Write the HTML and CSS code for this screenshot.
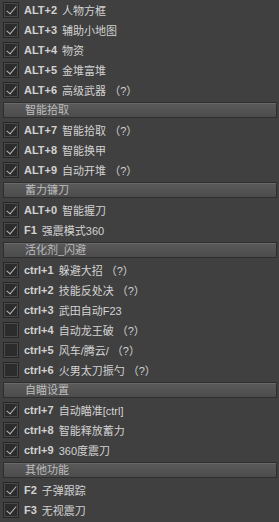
FILE: index.html
```html
<!DOCTYPE html>
<html lang="zh">
<head>
  <meta charset="UTF-8">
  <meta name="viewport" content="width=device-width, initial-scale=1.0">
  <title>功能设置</title>
  <link rel="stylesheet" href="styles.css">
</head>
<body>
  <div class="panel">
    <label class="opt"><span class="box on"></span><span class="key">ALT+2</span><span>人物方框</span></label>
    <label class="opt"><span class="box on"></span><span class="key">ALT+3</span><span>辅助小地图</span></label>
    <label class="opt"><span class="box on"></span><span class="key">ALT+4</span><span>物资</span></label>
    <label class="opt"><span class="box on"></span><span class="key">ALT+5</span><span>金堆富堆</span></label>
    <label class="opt"><span class="box on"></span><span class="key">ALT+6</span><span>高级武器 （?）</span></label>

    <div class="group"><span>智能拾取</span></div>
    <label class="opt"><span class="box on"></span><span class="key">ALT+7</span><span>智能拾取 （?）</span></label>
    <label class="opt"><span class="box on"></span><span class="key">ALT+8</span><span>智能换甲</span></label>
    <label class="opt"><span class="box on"></span><span class="key">ALT+9</span><span>自动开堆 （?）</span></label>

    <div class="group"><span>蓄力镰刀</span></div>
    <label class="opt"><span class="box on"></span><span class="key">ALT+0</span><span>智能握刀</span></label>
    <label class="opt"><span class="box on"></span><span class="key">F1</span><span>强震模式360</span></label>

    <div class="group"><span>活化剂_闪避</span></div>
    <label class="opt"><span class="box on"></span><span class="key">ctrl+1</span><span>躲避大招 （?）</span></label>
    <label class="opt"><span class="box on"></span><span class="key">ctrl+2</span><span>技能反处决 （?）</span></label>
    <label class="opt"><span class="box on"></span><span class="key">ctrl+3</span><span>武田自动F23</span></label>
    <label class="opt"><span class="box"></span><span class="key">ctrl+4</span><span>自动龙王破 （?）</span></label>
    <label class="opt"><span class="box"></span><span class="key">ctrl+5</span><span>风车/腾云/ （?）</span></label>
    <label class="opt"><span class="box"></span><span class="key">ctrl+6</span><span>火男太刀振勺 （?）</span></label>

    <div class="group"><span>自瞄设置</span></div>
    <label class="opt"><span class="box on"></span><span class="key">ctrl+7</span><span>自动瞄准[ctrl]</span></label>
    <label class="opt"><span class="box on"></span><span class="key">ctrl+8</span><span>智能释放蓄力</span></label>
    <label class="opt"><span class="box on"></span><span class="key">ctrl+9</span><span>360度震刀</span></label>

    <div class="group"><span>其他功能</span></div>
    <label class="opt"><span class="box on"></span><span class="key">F2</span><span>子弹跟踪</span></label>
    <label class="opt"><span class="box on"></span><span class="key">F3</span><span>无视震刀</span></label>
  </div>
</body>
</html>
```

FILE: styles.css
```css
html, body {
  margin: 0;
  padding: 0;
  background-color: #404040;
}

body {
  font-family: "Liberation Sans", "Noto Sans CJK SC", sans-serif;
  font-size: 11px;
  color: #d2d2d2;
}

.panel {
  display: flex;
  flex-direction: column;
  width: 279px;
}

.opt {
  display: flex;
  align-items: center;
  height: 20px;
  white-space: pre;
}

.box {
  position: relative;
  box-sizing: border-box;
  width: 16px;
  height: 16px;
  margin: 0 5px 0 3px;
  background-color: #2c2c2c;
  border: 1px solid #262626;
  box-shadow: inset 0 0 0 1px #4a4a4a;
}

/* check mark */
.box.on::after {
  content: "";
  position: absolute;
  left: 5px;
  top: 1px;
  width: 4px;
  height: 9px;
  border-right: 1px solid #b8b8b8;
  border-bottom: 1px solid #b8b8b8;
  transform: rotate(40deg);
}

.key {
  font-weight: bold;
  margin-right: 5px;
}

.group {
  height: 20px;
  display: flex;
  align-items: center;
}

.group span {
  box-sizing: border-box;
  display: block;
  width: 274px;
  height: 16px;
  margin-left: 3px;
  padding-left: 21px;
  line-height: 15px;
  color: #bdbdbd;
  background: linear-gradient(#5a5a5a, #4c4c4c);
  border: 1px solid #2e2e2e;
  box-shadow: inset 0 1px 0 #686868;
}
```
